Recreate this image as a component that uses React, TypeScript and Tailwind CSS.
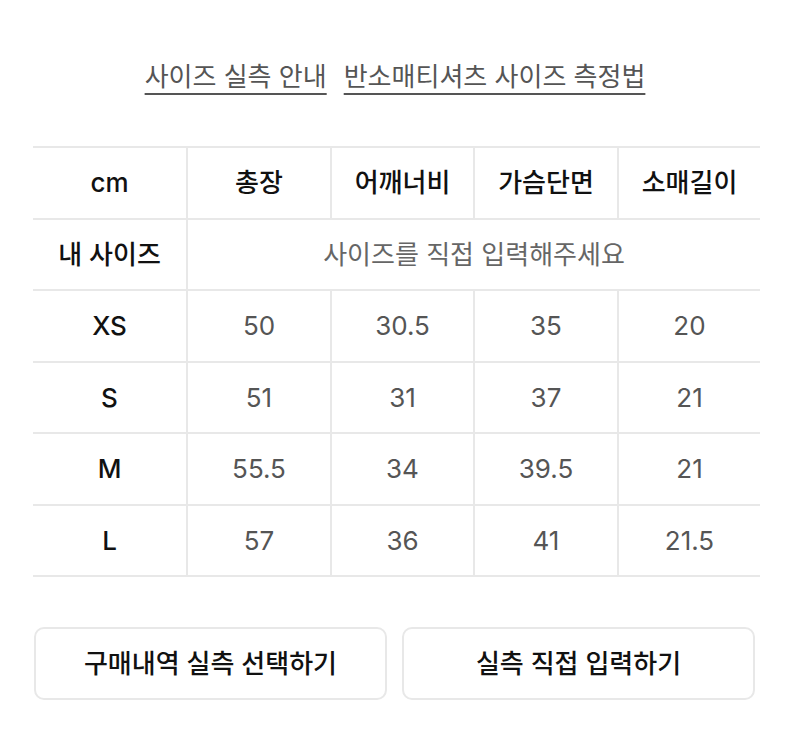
import React from "react";

const font = {
  fontFamily: 'Inter, "Noto Sans CJK KR", sans-serif',
};

const headers = ["총장", "어깨너비", "가슴단면", "소매길이"];
const rows: [string, string[]][] = [
  ["XS", ["50", "30.5", "35", "20"]],
  ["S", ["51", "31", "37", "21"]],
  ["M", ["55.5", "34", "39.5", "21"]],
  ["L", ["57", "36", "41", "21.5"]],
];

const cellBase = "h-[71.5px] border-b-2 border-[#e8e8e8] flex items-center justify-center";

export default function App() {
  return (
    <div className="w-[790px] h-[750px] bg-white" style={font}>
      <div className="flex justify-center gap-[17px] pt-[60px] h-[146px]">
        <a className="text-[26px] leading-[34px] text-[#555] underline decoration-2 underline-offset-[7px] decoration-[#555]">
          사이즈 실측 안내
        </a>
        <a className="text-[26px] leading-[34px] text-[#555] underline decoration-2 underline-offset-[7px] decoration-[#555]">
          반소매티셔츠 사이즈 측정법
        </a>
      </div>

      <div className="ml-[33px] w-[727px] grid grid-cols-[153px_144px_143px_144px_143px] border-t-2 border-[#e8e8e8]">
        <div className={`${cellBase} text-[26px] font-medium text-[#111]`}>cm</div>
        {headers.map((h) => (
          <div key={h} className={`${cellBase} border-l-2 text-[26px] font-medium text-[#111]`}>
            {h}
          </div>
        ))}

        <div className={`${cellBase} text-[26px] font-medium text-[#111]`}>내 사이즈</div>
        <div className={`${cellBase} col-span-4 border-l-2 text-[26px] text-[#666]`}>
          사이즈를 직접 입력해주세요
        </div>

        {rows.map(([size, vals]) => (
          <React.Fragment key={size}>
            <div className={`${cellBase} text-[26px] font-medium text-[#111]`}>{size}</div>
            {vals.map((v, i) => (
              <div key={i} className={`${cellBase} border-l-2 text-[26px] text-[#555]`}>
                {v}
              </div>
            ))}
          </React.Fragment>
        ))}
      </div>

      <div className="ml-[34px] mt-[50px] w-[721px] grid grid-cols-2 gap-[15px]">
        <button className="h-[73px] rounded-[10px] border-2 border-[#e8e8e8] bg-white text-[26px] font-medium text-[#111] flex items-center justify-center">
          구매내역 실측 선택하기
        </button>
        <button className="h-[73px] rounded-[10px] border-2 border-[#e8e8e8] bg-white text-[26px] font-medium text-[#111] flex items-center justify-center">
          실측 직접 입력하기
        </button>
      </div>
    </div>
  );
}
